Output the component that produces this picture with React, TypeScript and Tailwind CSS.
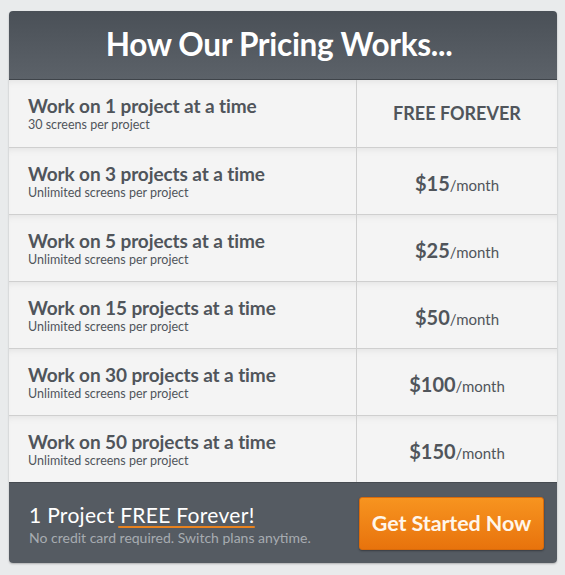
const plans = [
  { title: 'Work on 1 project at a time', sub: '30 screens per project', price: null },
  { title: 'Work on 3 projects at a time', sub: 'Unlimited screens per project', price: '$15' },
  { title: 'Work on 5 projects at a time', sub: 'Unlimited screens per project', price: '$25' },
  { title: 'Work on 15 projects at a time', sub: 'Unlimited screens per project', price: '$50' },
  { title: 'Work on 30 projects at a time', sub: 'Unlimited screens per project', price: '$100' },
  { title: 'Work on 50 projects at a time', sub: 'Unlimited screens per project', price: '$150' },
];

export default function App() {
  return (
    <div
      className="w-[565px] h-[575px] bg-[#e9ebec] pt-[11px] pl-[9px]"
      style={{ fontFamily: 'Lato, "Open Sans", sans-serif' }}
    >
      <div className="w-[548px] rounded-[4px] overflow-hidden shadow-[0_1px_2px_rgba(0,0,0,0.25)]">
        {/* Header */}
        <div className="h-[69px] flex items-center justify-center pr-[8px] bg-gradient-to-b from-[#4a5057] to-[#5c6269] border-b border-[#3f444a]">
          <h1 className="text-white text-[31.5px] font-bold tracking-[-0.3px] leading-none">How Our Pricing Works...</h1>
        </div>

        {/* Rows */}
        <div className="bg-[#f4f4f4]">
          {plans.map((p, i) => (
            <div
              key={i}
              className={`flex h-[67px] shadow-[inset_0_6px_8px_-6px_rgba(0,0,0,0.1)] ${i > 0 ? 'border-t border-[#cfcfcf]' : ''}`}
            >
              <div className="w-[348px] border-r border-[#cfcfcf] pl-[19px] pt-[14px]">
                <div className="text-[19px] font-bold text-[#50555b] leading-[23px] tracking-[-0.1px]">{p.title}</div>
                <div className="text-[12.5px] text-[#50555b] leading-[16px]">{p.sub}</div>
              </div>
              <div className="flex-1 flex items-center justify-center text-[#50555b]">
                {p.price ? (
                  <span className="pt-[3px]">
                    <span className="text-[20px] font-bold">{p.price}</span>
                    <span className="text-[15px]">/month</span>
                  </span>
                ) : (
                  <span className="text-[18px] font-bold">FREE FOREVER</span>
                )}
              </div>
            </div>
          ))}
        </div>

        {/* Footer */}
        <div className="h-[81px] bg-[#555b62] border-t border-[#464b51] flex items-center justify-between pl-[20px] pr-[13px]">
          <div className="pt-[2px]">
            <div className="text-white text-[21px] leading-[25px] tracking-[0.3px]">
              1 Project{' '}
              <span className="relative">
                FREE Forever!
                <span className="absolute -left-[2px] right-0 -bottom-[1px] h-[2px] rounded-full bg-[#e8821e]" />
              </span>
            </div>
            <div className="text-[#a7acb1] text-[14px] leading-[18px] mt-[2px]">No credit card required. Switch plans anytime.</div>
          </div>
          <button className="w-[185px] h-[53px] rounded-[3px] bg-gradient-to-b from-[#f7941f] to-[#e8730c] border border-[#d96a0a] shadow-[0_1px_2px_rgba(0,0,0,0.35)] text-[#fff6ea] text-[21.5px] font-bold tracking-[-0.1px]">
            Get Started Now
          </button>
        </div>
      </div>
    </div>
  );
}
